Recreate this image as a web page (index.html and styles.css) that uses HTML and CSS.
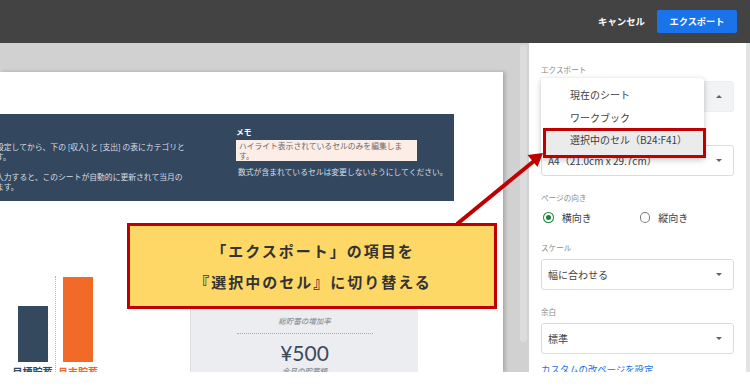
FILE: index.html
```html
<!DOCTYPE html>
<html lang="ja">
<head>
<meta charset="utf-8">
<title>エクスポート</title>
<link rel="stylesheet" href="styles.css">
</head>
<body>
<div class="app">
  <header class="topbar">
    <span class="cancel">キャンセル</span>
    <button class="export-btn">エクスポート</button>
  </header>
  <div class="main">
    <section class="preview">
      <div class="page">
        <div class="banner">
          <div class="banner-left">
            <p>設定してから、下の [収入] と [支出] の表にカテゴリと<br>す。</p>
            <p>入力すると、このシートが自動的に更新されて当月の<br>ます。</p>
          </div>
          <div class="banner-memo">
            <div class="memo-title">メモ</div>
            <div class="memo-hl">ハイライト表示されているセルのみを編集しま<br>す。</div>
            <div class="memo-note">数式が含まれているセルは変更しないようにしてください。</div>
          </div>
        </div>
        <div class="lower">
          <div class="chart">
            <div class="bar-col">
              <div class="bar bar-dark" style="height:56px"></div>
              <div class="bar-label dark">目標貯蓄</div>
            </div>
            <div class="bar-col divided">
              <div class="bar bar-orange" style="height:85px"></div>
              <div class="bar-label orange">月末貯蓄</div>
            </div>
          </div>
          <div class="card">
            <div class="card-big">12%</div>
            <div class="card-cap">総貯蓄の増加率</div>
            <div class="card-rule"></div>
            <div class="card-amount">¥500</div>
            <div class="card-cap">今月の貯蓄額</div>
          </div>
        </div>
      </div>
      <div class="scroll-thumb"></div>
    </section>
    <aside class="panel">
      <div class="group">
        <div class="label">エクスポート</div>
        <div class="select open"><span></span><i class="caret up"></i></div>
      </div>
      <div class="group">
        <div class="label">用紙サイズ</div>
        <div class="select"><span>A4（21.0cm x 29.7cm）</span><i class="caret"></i></div>
      </div>
      <div class="group">
        <div class="label">ページの向き</div>
        <div class="radios">
          <span class="radio on"></span><span class="radio-text">横向き</span>
          <span class="radio"></span><span class="radio-text">縦向き</span>
        </div>
      </div>
      <div class="group">
        <div class="label">スケール</div>
        <div class="select"><span>幅に合わせる</span><i class="caret"></i></div>
      </div>
      <div class="group">
        <div class="label">余白</div>
        <div class="select"><span>標準</span><i class="caret"></i></div>
      </div>
      <div class="link">カスタムの改ページを設定</div>

      <div class="menu">
        <div class="menu-item">現在のシート</div>
        <div class="menu-item">ワークブック</div>
        <div class="menu-item active">選択中のセル（B24:F41）</div>
        <div class="menu-mark"></div>
      </div>
      <div class="panel-edge"></div>
    </aside>
  </div>

  <div class="callout">
    <div>「エクスポート」の項目を</div>
    <div>『選択中のセル』に切り替える</div>
  </div>
  <svg class="arrow" width="750" height="372" viewBox="0 0 750 372">
    <line x1="457" y1="224" x2="534" y2="161" stroke="#c00000" stroke-width="4"/>
    <polygon points="543,153 537.5,167 527.5,155" fill="#c00000"/>
  </svg>
</div>
</body>
</html>
```

FILE: styles.css
```css
* { box-sizing: border-box; }
html, body { margin: 0; padding: 0; background: #ffffff; }
body { font-family: "Noto Sans CJK JP", "Noto Sans", sans-serif; }
p { margin: 0; }

.app {
  position: relative;
  width: 750px;
  height: 372px;
  overflow: hidden;
}

/* top bar */
.topbar {
  height: 43px;
  background: #434343;
  display: flex;
  justify-content: flex-end;
  align-items: center;
  padding-right: 13px;
  gap: 12px;
}
.cancel {
  color: #ffffff;
  font-weight: 700;
  font-size: 9.4px;
  margin-top: -1px;
}
.export-btn {
  width: 80px;
  height: 23px;
  border: 0;
  border-radius: 2px;
  background: #1a73e8;
  color: #ffffff;
  font-family: inherit;
  font-weight: 700;
  font-size: 9.2px;
  padding: 0;
  margin-top: -1px;
}

.main {
  display: flex;
  height: 329px;
}

/* preview */
.preview {
  width: 529px;
  background: #d1d1d1;
  display: flex;
  align-items: flex-start;
}
.page {
  width: 503px;
  height: 300px;
  margin-top: 29px;
  background: #ffffff;
  overflow: hidden;
  padding-top: 42px;
  box-shadow: 2px 0 4px rgba(0,0,0,0.22);
}
.scroll-thumb {
  width: 7px;
  height: 297px;
  margin-top: 2px;
  margin-left: 17px;
  background: #dcdcdc;
  border-radius: 3px;
}

.banner {
  width: 454px;
  height: 87px;
  background: #33475e;
  display: flex;
  color: #d9dee5;
  font-size: 7.8px;
  line-height: 10px;
  white-space: nowrap;
}
.banner-left {
  width: 240px;
  margin-left: -4px;
  padding-top: 28px;
}
.banner-left p + p { margin-top: 10px; }
.banner-memo {
  width: 214px;
  padding-top: 13px;
}
.memo-title {
  color: #ffffff;
  font-weight: 700;
}
.memo-hl {
  width: 181px;
  margin-top: 3px;
  padding: 1px 3px 0;
  height: 21px;
  background: #fcede7;
  color: #6b6b6b;
}
.memo-note {
  margin-top: 6px;
  padding-left: 2px;
}

.lower {
  display: flex;
}
.chart {
  width: 190px;
  height: 177px;
  padding-left: 10px;
  display: flex;
  align-items: flex-end;
}
.bar-col {
  width: 45px;
  display: flex;
  flex-direction: column;
  align-items: center;
}
.bar-col.divided {
  border-left: 1px dotted #b5b5b5;
  height: 102px;
  justify-content: flex-end;
}
.bar { width: 30px; }
.bar-dark { background: #34495e; }
.bar-orange { background: #f26a27; }
.bar-label {
  margin-top: 4px;
  font-size: 10px;
  line-height: 12px;
  font-weight: 700;
  white-space: nowrap;
}
.bar-label.dark { color: #34495e; }
.bar-label.orange { color: #f26a27; }

.card {
  width: 228px;
  margin-top: 49px;
  height: 140px;
  background: #ebedf0;
  border-left: 1px solid #dcdee2;
  display: flex;
  flex-direction: column;
  align-items: center;
  padding-top: 38px;
  color: #34495e;
}
.card-big {
  font-family: "Lato", "Noto Sans", sans-serif;
  font-size: 20px;
  line-height: 24px;
}
.card-cap {
  margin-top: 3px;
  font-size: 7.5px;
  line-height: 12px;
  font-style: italic;
  color: #7a8088;
}
.card-rule {
  width: 136px;
  margin-top: 6px;
  border-top: 1px dotted #a8adb3;
}
.card-amount {
  margin-top: 6px;
  font-family: "Lato", "Noto Sans", sans-serif;
  font-size: 21px;
  line-height: 26px;
  color: #3b4a5c;
}
.card-amount + .card-cap { margin-top: -1px; }

/* right panel */
.panel {
  position: relative;
  width: 221px;
  background: #ffffff;
  padding: 22px 16px 0 12px;
}
.panel-edge {
  position: absolute;
  right: 0;
  top: 0;
  bottom: 0;
  width: 4px;
  background: #e3e3e3;
}
.group + .group { margin-top: 17px; }
.label {
  font-size: 7.6px;
  line-height: 10px;
  color: #8a8a8a;
  margin-bottom: 6px;
}
.select {
  height: 31px;
  border: 1px solid #dadce0;
  border-radius: 3px;
  display: flex;
  align-items: center;
  justify-content: space-between;
  padding: 0 11px 0 6px;
  font-size: 10px;
  color: #3c4043;
  white-space: nowrap;
}
.select.open {
  background: #f1f3f4;
  border-color: #eceef0;
}
.caret {
  width: 0;
  height: 0;
  border-left: 3px solid transparent;
  border-right: 3px solid transparent;
  border-top: 3px solid #5f6368;
}
.caret.up {
  border-top: 0;
  border-bottom: 3px solid #5f6368;
}

.radios {
  display: flex;
  align-items: center;
  height: 18px;
  margin-top: -1px;
  font-size: 10px;
  color: #3c4043;
}
.radio {
  width: 11px;
  height: 11px;
  border-radius: 50%;
  border: 1.5px solid #7a7a7a;
  margin-left: 2px;
  display: flex;
  align-items: center;
  justify-content: center;
}
.radio.on { border-color: #188038; }
.radio.on::after {
  content: "";
  width: 5px;
  height: 5px;
  border-radius: 50%;
  background: #188038;
}
.radio-text { margin-left: 8px; width: 77px; }

.link {
  margin-top: 9px;
  font-size: 9.4px;
  line-height: 12px;
  color: #1a73e8;
  white-space: nowrap;
}

/* dropdown menu */
.menu {
  position: absolute;
  left: 12px;
  top: 35px;
  width: 163px;
  height: 80px;
  background: #ffffff;
  padding-top: 5px;
  box-shadow: 0 2px 6px rgba(0,0,0,0.22), 0 0 1px rgba(0,0,0,0.15);
  border-radius: 2px;
}
.menu-item {
  height: 23px;
  line-height: 23px;
  padding-left: 29px;
  font-size: 10px;
  color: #3c4043;
  white-space: nowrap;
}
.menu-item.active {
  margin: 0 0 0 2px;
  height: 26px;
  line-height: 22px;
  background: #ebebeb;
  padding-left: 27px;
}
.menu-mark {
  position: absolute;
  left: 2px;
  top: 50px;
  width: 163px;
  height: 30px;
  border: 3px solid #c00000;
}

/* annotation overlay */
.callout {
  position: absolute;
  left: 127px;
  top: 223px;
  width: 370px;
  height: 86px;
  background: #fed866;
  border: 3px solid #c00000;
  display: flex;
  flex-direction: column;
  align-items: center;
  justify-content: center;
  font-weight: 700;
  font-size: 15px;
  line-height: 31px;
  letter-spacing: 2px;
  color: #333333;
  padding-left: 2px;
}
.arrow {
  position: absolute;
  left: 0;
  top: 0;
}
```
